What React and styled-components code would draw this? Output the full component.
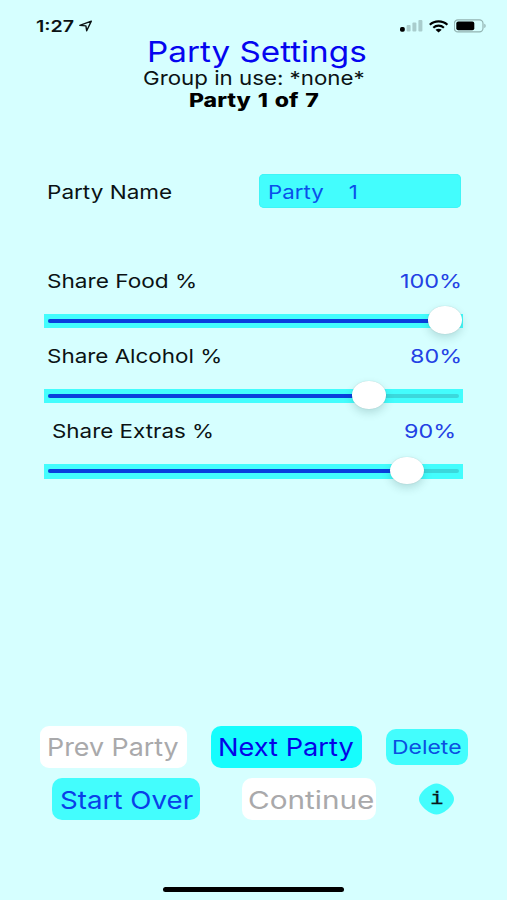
import React, { useLayoutEffect, useRef, useState } from "react";
import styled, { createGlobalStyle } from "styled-components";

const GlobalStyle = createGlobalStyle`
  * { box-sizing: border-box; }
  body {
    margin: 0;
    background: #d6ffff;
    font-family: Inter, "Liberation Sans", sans-serif;
  }
  button, input { font: inherit; }
`;

const Screen = styled.main`
  width: 507px;
  height: 900px;
  display: flex;
  flex-direction: column;
  overflow: hidden;
  background: #d6ffff;
`;

const StatusBar = styled.header`
  height: 37px;
  padding: 15px 20px 0 36px;
  display: flex;
  justify-content: space-between;
  align-items: flex-start;
`;

const StatusGroup = styled.div`
  display: flex;
  align-items: center;
  height: 22px;
  gap: ${(p) => p.$gap}px;
`;

const Headings = styled.section`
  display: flex;
  flex-direction: column;
  align-items: center;
  height: 74px;
  padding-left: 7px;
`;

const Slot = styled.span`
  display: block;
  flex: none;
  width: ${(p) => p.$width}px;
  height: ${(p) => p.$line}px;
  line-height: ${(p) => p.$line}px;
  font-size: ${(p) => p.$size}px;
  font-weight: ${(p) => p.$weight};
  color: ${(p) => p.$color};
  margin-left: ${(p) => p.$shift}px;
  text-align: left;
  white-space: pre;
`;

const Glyphs = styled.span`
  display: inline-block;
  vertical-align: top;
  transform-origin: 0 50%;
  word-spacing: ${(p) => p.$gap}px;
`;

/* Wide lettering: the text is stretched horizontally to fill its slot. */
function WideText({ width, size, line = 24, weight = 400, color = "#0b1214", shift = 0, gap = 0, children }) {
  const ref = useRef(null);
  const [scale, setScale] = useState(1);
  useLayoutEffect(() => {
    setScale(width / ref.current.offsetWidth);
  }, [width, children]);
  return (
    <Slot $width={width} $size={size} $line={line} $weight={weight} $color={color} $shift={shift}>
      <Glyphs ref={ref} $gap={gap} style={{ transform: `scaleX(${scale})` }}>{children}</Glyphs>
    </Slot>
  );
}

const NameRow = styled.section`
  display: flex;
  align-items: center;
  justify-content: space-between;
  height: 35px;
  margin-top: 62px;
  padding: 0 46px 0 46px;
`;

const NameLabel = styled.div`
  padding: 2px 0 0 1px;
`;

const NameField = styled.div`
  width: 202px;
  height: 34px;
  padding: 2px 0 0 8.5px;
  display: flex;
  align-items: center;
  border-radius: 5px;
  background: #43fdfd;
  box-shadow: inset 0 0 0 1px #3ff5f6;
`;

const Shares = styled.section`
  margin-top: 52px;
  padding: 0 44px;
`;

const ShareBlock = styled.div`
  height: 75.2px;
  padding-top: 9px;
`;

const ShareHead = styled.div`
  display: flex;
  justify-content: space-between;
  padding: 0 ${(p) => p.$inset - 1}px 0 ${(p) => p.$inset}px;
  margin-bottom: 20.7px;
`;

const Slider = styled.div`
  position: relative;
  display: flex;
  align-items: center;
  height: 14.5px;
  padding: 0 4px;
  background: #43fdfd;
`;

const Track = styled.div`
  width: 100%;
  height: 4px;
  border-radius: 2px;
  background: #3bd8dc;
`;

const Fill = styled.div`
  height: 4px;
  border-radius: 2px;
  background: #0a3fdc;
`;

const Thumb = styled.div`
  position: absolute;
  top: -7.5px;
  width: 33.5px;
  height: 27.5px;
  border-radius: 50%;
  background: #fff;
  box-shadow: 0 4px 8px rgba(0, 60, 60, 0.17), 0 0 1px rgba(0, 60, 60, 0.25);
`;

const Actions = styled.footer`
  margin-top: 240.4px;
  display: flex;
  flex-direction: column;
  gap: 10.4px;
`;

const ActionRow = styled.div`
  display: flex;
  align-items: center;
  height: 42px;
  padding-left: ${(p) => p.$indent}px;
`;

const Button = styled.button`
  flex: none;
  display: flex;
  align-items: center;
  justify-content: center;
  width: ${(p) => p.$width}px;
  height: ${(p) => p.$height}px;
  margin: 0 ${(p) => p.$after}px 0 0;
  padding: 1px 0 0;
  border: 0;
  border-radius: ${(p) => p.$radius};
  background: ${(p) => p.$fill};
`;

const InfoButton = styled.button`
  display: grid;
  place-items: center;
  width: 35px;
  height: 32px;
  padding: 0;
  border: 0;
  background: transparent;
`;

const InfoShape = styled.svg`
  grid-area: 1 / 1;
`;

const InfoLetter = styled.span`
  grid-area: 1 / 1;
  z-index: 1;
  font-family: "Liberation Mono", monospace;
  font-size: 19px;
  line-height: 30px;
  color: #08191c;
  transform: scaleX(1.15);
  -webkit-text-stroke: 0.3px #08191c;
`;

const HomeIndicator = styled.div`
  width: 181px;
  height: 5px;
  margin: auto 0 8px 163px;
  border-radius: 3px;
  background: #000;
`;

const shares = [
  { label: "Share Food %", width: 150, inset: 2.5, value: 100, valueWidth: 62, fill: 384, thumb: 384 },
  { label: "Share Alcohol %", width: 175.5, inset: 2.5, value: 80, valueWidth: 52, fill: 308, thumb: 308 },
  { label: "Share Extras %", width: 162.5, inset: 8, value: 90, valueWidth: 52, fill: 346, thumb: 346 },
];

function Location() {
  return (
    <svg width="14" height="13" viewBox="0 0 14 13">
      <path d="M.8 5.4 12.3 1.1 7.7 10.8 6.9 5.9Z" fill="none" stroke="#0b1214" strokeWidth="1.4" strokeLinejoin="round" />
    </svg>
  );
}

function Signal() {
  return (
    <svg width="24" height="14" viewBox="0 0 24 14">
      <rect x="0" y="8" width="4.8" height="4.8" rx="1.7" fill="#000" />
      <rect x="6.6" y="6" width="4" height="6.6" rx="1" fill="#a9cdcd" />
      <rect x="12.4" y="3.5" width="4" height="9.1" rx="1" fill="#a9cdcd" />
      <rect x="18.4" y="1" width="4" height="11.6" rx="1" fill="#a9cdcd" />
    </svg>
  );
}

function Wifi() {
  return (
    <svg width="20" height="13" viewBox="0 0 20 13">
      <path d="M.8 4.8C5.6 .2 13.6 .2 18.4 4.8M4.3 7.7c3-2.7 7.6-2.7 10.6 0" fill="none" stroke="#000" strokeWidth="2.2" />
      <path d="M6.5 9.7c1.8-1.4 4.4-1.4 6.2 0L9.6 12.5Z" fill="#000" />
    </svg>
  );
}

function Battery() {
  return (
    <svg width="33" height="14" viewBox="0 0 33 14">
      <rect x="0.3" y="0.9" width="28.7" height="12" rx="3.6" fill="none" stroke="#92b3b1" strokeWidth="1.2" />
      <rect x="2.3" y="2.6" width="18" height="8.6" rx="2" fill="#000" />
      <path d="M30.3 4.8c1.8.5 1.8 3.7 0 4.2Z" fill="#92b3b1" />
    </svg>
  );
}

export default function App() {
  return (
    <>
      <GlobalStyle />
      <Screen>
        <StatusBar>
          <StatusGroup $gap={5}>
            <WideText width={38} size={15.5} line={23} weight={600}>1:27</WideText>
            <Location />
          </StatusGroup>
          <StatusGroup $gap={5}>
            <Signal />
            <Wifi />
            <Battery />
          </StatusGroup>
        </StatusBar>

        <Headings>
          <WideText width={220} size={29} line={29} color="#0505ef" shift={-1}>Party Settings</WideText>
          <WideText width={222} size={19.3} line={25} shift={-7}>Group in use: *none*</WideText>
          <WideText width={130} size={18.6} line={18} weight={800} gap={1.5} color="#000" shift={-7}>Party 1 of 7</WideText>
        </Headings>

        <NameRow>
          <NameLabel>
            <WideText width={125} size={19.3}>Party Name</WideText>
          </NameLabel>
          <NameField>
            <WideText width={90} size={19.3} color="#0a50ea">Party    1</WideText>
          </NameField>
        </NameRow>

        <Shares>
          {shares.map((s) => (
            <ShareBlock key={s.label}>
              <ShareHead $inset={s.inset}>
                <WideText width={s.width} size={19.3}>{s.label}</WideText>
                <WideText width={s.valueWidth} size={19.3} color="#2341e4">{s.value + "%"}</WideText>
              </ShareHead>
              <Slider>
                <Track>
                  <Fill style={{ width: s.fill }} />
                </Track>
                <Thumb style={{ left: s.thumb }} />
              </Slider>
            </ShareBlock>
          ))}
        </Shares>

        <Actions>
          <ActionRow $indent={40}>
            <Button $width={147} $height={42} $after={24} $radius="9px" $fill="#fff">
              <WideText width={132} size={24.8} line={30} shift={-1} color="#a9a9ab">Prev Party</WideText>
            </Button>
            <Button $width={151} $height={42} $after={24} $radius="10px" $fill="#16fdfd">
              <WideText width={136} size={24.8} line={30} shift={-1} color="#0505e6">Next Party</WideText>
            </Button>
            <Button $width={82} $height={36} $after={0} $radius="10px" $fill="#43fdfd">
              <WideText width={69} size={19.3} shift={-2} color="#0a50e0">Delete</WideText>
            </Button>
          </ActionRow>
          <ActionRow $indent={52}>
            <Button $width={148} $height={42} $after={42} $radius="10px" $fill="#43fdfd">
              <WideText width={133} size={24.8} line={30} color="#0a40e8">Start Over</WideText>
            </Button>
            <Button $width={134} $height={42} $after={43} $radius="10px" $fill="#fff">
              <WideText width={127} size={24.8} line={30} shift={5} color="#a9a9ab">Continue</WideText>
            </Button>
            <InfoButton aria-label="Info">
              <InfoShape width="35" height="32" viewBox="0 0 35 32">
                <path d="M13 1.5Q17.5-.5 22 1.5Q30 5 34 12Q36 16 34 20Q30 27 22 30.5Q17.5 32.5 13 30.5Q5 27 1 20Q-1 16 1 12Q5 5 13 1.5Z" fill="#43fdfd" />
              </InfoShape>
              <InfoLetter>i</InfoLetter>
            </InfoButton>
          </ActionRow>
        </Actions>

        <HomeIndicator />
      </Screen>
    </>
  );
}
